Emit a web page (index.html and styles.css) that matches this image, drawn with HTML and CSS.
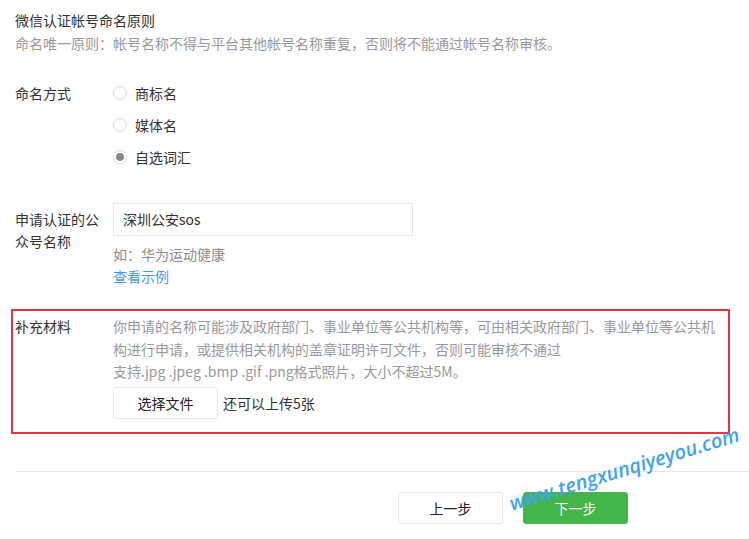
FILE: index.html
```html
<!DOCTYPE html>
<html lang="zh-CN">
<head>
    <meta charset="UTF-8">
    <title>微信认证 - 命名</title>
    <link rel="stylesheet" href="styles.css">
</head>
<body>
    <div class="page">
        <!-- 命名原则 -->
        <div class="rule">
            <h3>微信认证帐号命名原则</h3>
            <p>命名唯一原则：帐号名称不得与平台其他帐号名称重复，否则将不能通过帐号名称审核。</p>
        </div>

        <div class="form-row naming">
            <label class="form-label">命名方式</label>
            <div class="form-body">
                <div class="radio"><span class="radio-dot"></span>商标名</div>
                <div class="radio"><span class="radio-dot"></span>媒体名</div>
                <div class="radio"><span class="radio-dot checked"></span>自选词汇</div>
            </div>
        </div>

        <div class="form-row name">
            <label class="form-label">申请认证的公众号名称</label>
            <div class="form-body">
                <div class="input">深圳公安sos</div>
                <p class="tips">如：华为运动健康</p>
                <a class="link" href="#">查看示例</a>
            </div>
        </div>

        <!-- 补充材料 -->
        <div class="form-row extra">
            <label class="form-label">补充材料</label>
            <div class="form-body">
                <p class="desc">你申请的名称可能涉及政府部门、事业单位等公共机构等，可由相关政府部门、事业单位等公共机构进行申请，或提供相关机构的盖章证明许可文件，否则可能审核不通过</p>
                <p class="desc">支持.jpg .jpeg .bmp .gif .png格式照片，大小不超过5M。</p>
                <div class="upload">
                    <span class="btn">选择文件</span>
                    <span class="upload-left">还可以上传5张</span>
                </div>
            </div>
        </div>

        <div class="toolbar">
            <span class="btn">上一步</span>
            <span class="btn btn-primary">下一步</span>
        </div>

        <div class="watermark">www.tengxunqiyeyou.com</div>
    </div>
</body>
</html>
```

FILE: styles.css
```css
/* 基础 */
* {
    margin: 0;
    padding: 0;
    box-sizing: border-box;
}

body {
    font-family: "Microsoft YaHei", "Noto Sans CJK SC", sans-serif;
    font-size: 14px;
    line-height: 22px;
    color: #333;
    background: #fff;
}

.page {
    position: relative;
    padding: 9px 0 0 15px;
    min-height: 539px;
    overflow: hidden;
}

/* 命名原则 */
.rule h3 {
    font-size: 14px;
    font-weight: normal;
    line-height: 22px;
    margin-bottom: 1px;
}

.rule p {
    color: #999;
}

/* 表单行 */
.form-row {
    display: flex;
}

.form-label {
    width: 98px;
    flex-shrink: 0;
    padding-right: 10px;
}

.form-body {
    flex: 1;
}

.naming {
    margin-top: 28px;
}

.radio {
    display: flex;
    align-items: center;
    height: 22px;
    margin-bottom: 10px;
}

.radio-dot {
    width: 14px;
    height: 14px;
    margin-right: 8px;
    border: 1px solid #d9dadc;
    border-radius: 50%;
    display: flex;
    align-items: center;
    justify-content: center;
}

.radio-dot.checked::after {
    content: "";
    width: 8px;
    height: 8px;
    border-radius: 50%;
    background: #888;
}

.name {
    margin-top: 25px;
}

.name .form-label {
    padding-top: 5px;
}

.input {
    width: 300px;
    height: 33px;
    border: 1px solid #e7e7eb;
    padding: 4px 9px;
    margin-bottom: 7px;
}

.tips {
    color: #8d8d8d;
}

.link {
    color: #459ae9;
    text-decoration: none;
}

/* 补充材料（红框标注） */
.extra {
    margin: 22px 19px 0 -4px;
    border: 2px solid #e0363f;
    padding: 4px 10px 13px 2px;
}

.desc {
    color: #999;
    line-height: 22.5px;
}

.upload {
    display: flex;
    align-items: center;
    margin-top: 4px;
}

.upload-left {
    margin-left: 5px;
}

/* 按钮 */
.btn {
    display: inline-block;
    width: 105px;
    height: 32px;
    line-height: 30px;
    text-align: center;
    border: 1px solid #e4e8eb;
    border-radius: 3px;
    background: #fff;
    color: #222;
}

.btn-primary {
    background: #44b549;
    border-color: #44b549;
    color: #fff;
}

.toolbar {
    margin-top: 37px;
    border-top: 1px solid #e7e7eb;
    padding: 20px 0 0 383px;
    display: flex;
    gap: 20px;
}

/* 水印 */
.watermark {
    position: absolute;
    left: 510px;
    top: 492px;
    font-family: "Open Sans", "DejaVu Sans", sans-serif;
    font-size: 20px;
    font-weight: 600;
    font-style: italic;
    line-height: 24px;
    color: #3fa4ee;
    transform: rotate(-17deg);
    transform-origin: left center;
    white-space: nowrap;
}
```
